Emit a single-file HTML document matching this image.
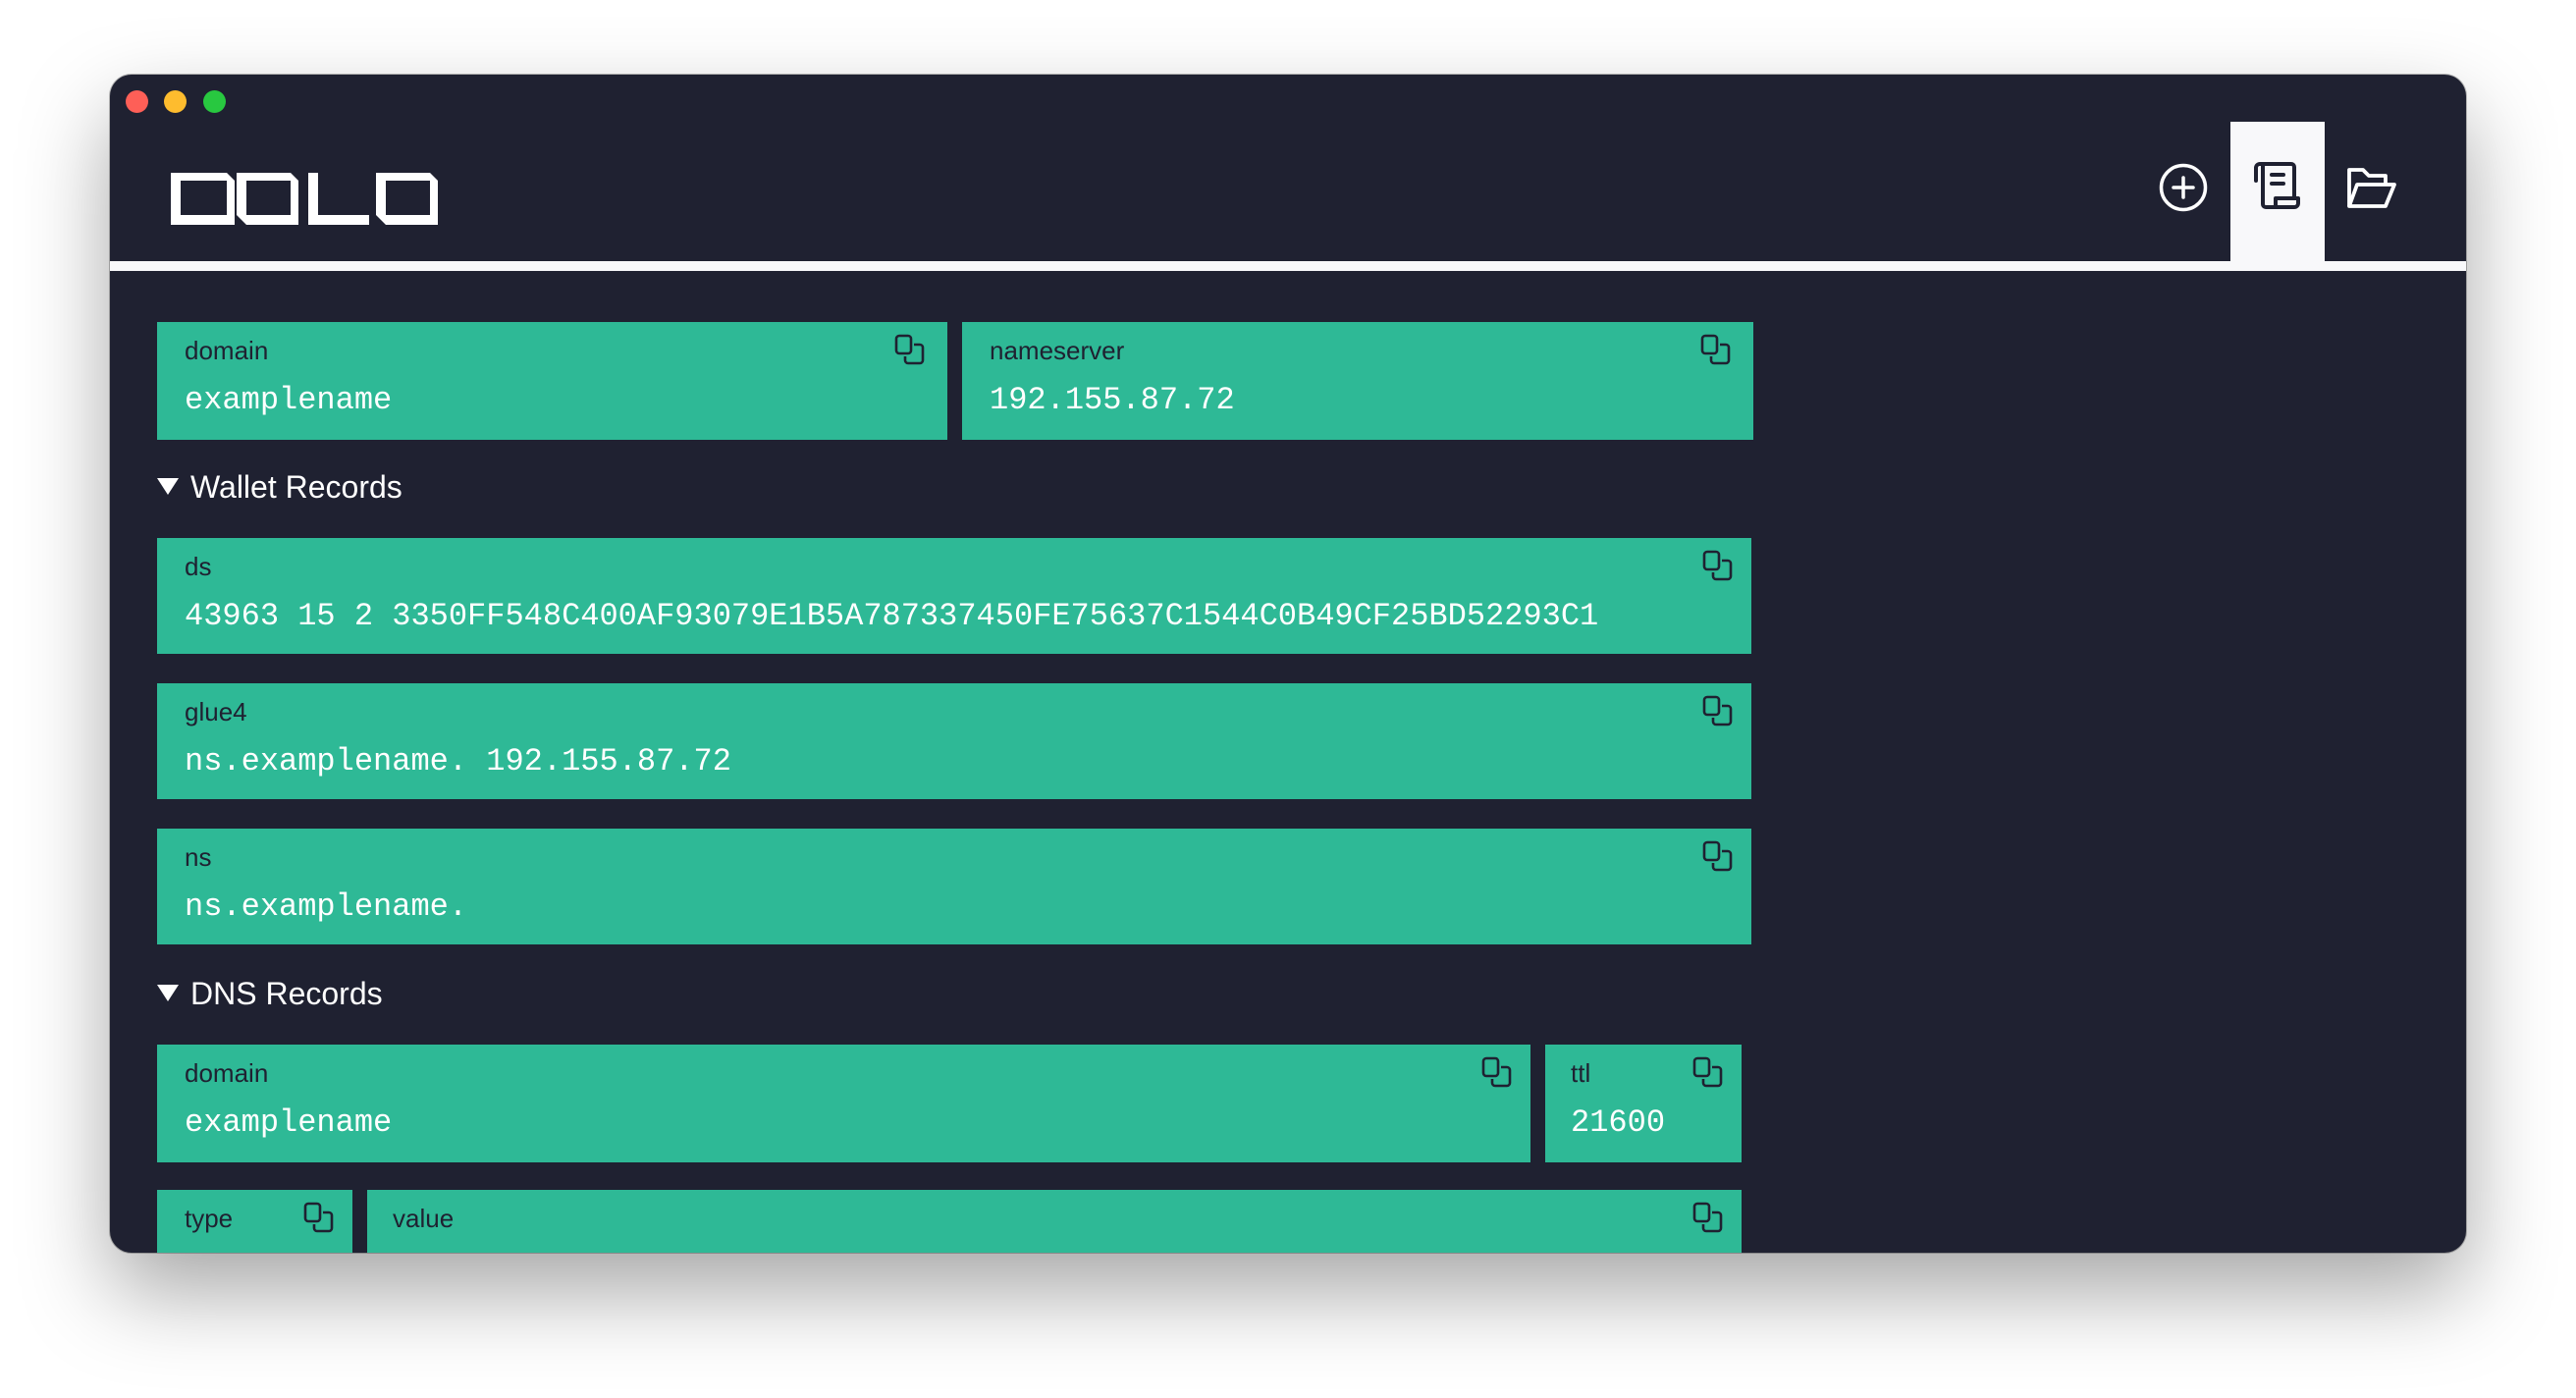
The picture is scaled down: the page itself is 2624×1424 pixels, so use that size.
<!DOCTYPE html>
<html><head><meta charset="utf-8"><style>
*{margin:0;padding:0;box-sizing:border-box}
body{width:2624px;height:1424px;background:#fff;position:relative;overflow:hidden;font-family:"Liberation Sans",sans-serif}
.win{position:absolute;left:112px;top:76px;width:2400px;height:1200px;background:#1f2131;border-radius:22px;overflow:hidden;box-shadow:0 40px 90px rgba(0,0,0,.35),0 0 0 1px rgba(0,0,0,.25)}
.dot{position:absolute;top:16px;width:23px;height:23px;border-radius:50%}
.rule{position:absolute;left:0;top:190px;width:100%;height:10px;background:#f8f8fa}
.tab{position:absolute;left:2160px;top:48px;width:96px;height:142px;background:#f8f8fa}
.card{position:absolute;background:#2eb996;height:118px}
.lbl{position:absolute;left:28px;top:14px;font-size:26px;color:#1f2131;font-family:"Liberation Sans",sans-serif}
.val{position:absolute;left:28px;top:61px;font-size:32px;color:#fff;font-family:"Liberation Mono",monospace;white-space:nowrap}
.cp{position:absolute;top:12px;width:32px;height:32px}
.h{position:absolute;left:48px;font-size:32px;color:#fff}
.h span{display:inline-block;width:0;height:0;border-left:11px solid transparent;border-right:11px solid transparent;border-top:17px solid #fff;margin-right:12px;vertical-align:3px}
</style></head><body>
<div class="win">
<div class="dot" style="left:16px;background:#fe5f57"></div>
<div class="dot" style="left:55px;background:#febc2e"></div>
<div class="dot" style="left:95px;background:#28c840"></div>
<svg style="position:absolute;left:62px;top:100px" width="274" height="53" viewBox="0 0 274 53" fill="#fff">
<path d="M0 0h57l8 8v35h-8v-35h-47v35h55v10h-65z"/>
<path d="M67 0h55l8 8v35h-8v-35h-45v35h53v10h-53l-10-10z"/>
<path d="M140 0h10v43h52v10h-62z"/>
<path d="M209 0h55l8 8v35h-8v-35h-45v35h53v10h-53l-10-10z"/>
</svg>
<div class="tab"></div>
<div class="rule"></div>
<svg style="position:absolute;left:2087px;top:90px" width="50" height="50" viewBox="0 0 50 50" fill="none" stroke="#fff" stroke-width="3.5" stroke-linecap="round"><circle cx="25" cy="25" r="22.5"/><path d="M25 15v20M15 25h20"/></svg>
<svg style="position:absolute;left:2183px;top:88px" width="50" height="50" viewBox="0 0 50 50" fill="none" stroke="#1f2131" stroke-width="4" stroke-linecap="round" stroke-linejoin="round"><path d="M3 20V7a4 4 0 0 1 4-4h32a3 3 0 0 1 3 3v31"/><path d="M10 3v41a3 3 0 0 0 3 3h29a4 4 0 0 0 4-4v-5H23v8"/><path d="M19 14h12M19 23h12"/></svg>
<svg style="position:absolute;left:2278px;top:92px" width="52" height="46" viewBox="0 0 52 46" fill="none" stroke="#fff" stroke-width="3.8" stroke-linejoin="round"><path d="M3 42V5h14l6 6h17v8"/><path d="M3 42l8-22h38l-9 22z"/></svg>

<div class="card" style="left:48px;top:252px;width:805px;height:120px"><div class="lbl">domain</div><div class="val">examplename</div><svg class="cp" style="right:22px" viewBox="0 0 32 32" fill="none" stroke="#1f2131" stroke-width="2.6"><rect x="2" y="2" width="15" height="18" rx="3"/><path d="M20 11h6a3 3 0 0 1 3 3v13a3 3 0 0 1-3 3H14a3 3 0 0 1-3-3v-4"/></svg></div>
<div class="card" style="left:868px;top:252px;width:806px;height:120px"><div class="lbl">nameserver</div><div class="val">192.155.87.72</div><svg class="cp" style="right:22px" viewBox="0 0 32 32" fill="none" stroke="#1f2131" stroke-width="2.6"><rect x="2" y="2" width="15" height="18" rx="3"/><path d="M20 11h6a3 3 0 0 1 3 3v13a3 3 0 0 1-3 3H14a3 3 0 0 1-3-3v-4"/></svg></div>

<div class="h" style="top:402px"><span></span>Wallet Records</div>
<div class="card" style="left:48px;top:472px;width:1624px"><div class="lbl">ds</div><div class="val">43963 15 2 3350FF548C400AF93079E1B5A787337450FE75637C1544C0B49CF25BD52293C1</div><svg class="cp" style="right:18px" viewBox="0 0 32 32" fill="none" stroke="#1f2131" stroke-width="2.6"><rect x="2" y="2" width="15" height="18" rx="3"/><path d="M20 11h6a3 3 0 0 1 3 3v13a3 3 0 0 1-3 3H14a3 3 0 0 1-3-3v-4"/></svg></div>
<div class="card" style="left:48px;top:620px;width:1624px"><div class="lbl">glue4</div><div class="val">ns.examplename. 192.155.87.72</div><svg class="cp" style="right:18px" viewBox="0 0 32 32" fill="none" stroke="#1f2131" stroke-width="2.6"><rect x="2" y="2" width="15" height="18" rx="3"/><path d="M20 11h6a3 3 0 0 1 3 3v13a3 3 0 0 1-3 3H14a3 3 0 0 1-3-3v-4"/></svg></div>
<div class="card" style="left:48px;top:768px;width:1624px"><div class="lbl">ns</div><div class="val">ns.examplename.</div><svg class="cp" style="right:18px" viewBox="0 0 32 32" fill="none" stroke="#1f2131" stroke-width="2.6"><rect x="2" y="2" width="15" height="18" rx="3"/><path d="M20 11h6a3 3 0 0 1 3 3v13a3 3 0 0 1-3 3H14a3 3 0 0 1-3-3v-4"/></svg></div>

<div class="h" style="top:918px"><span></span>DNS Records</div>
<div class="card" style="left:48px;top:988px;width:1399px;height:120px"><div class="lbl">domain</div><div class="val">examplename</div><svg class="cp" style="right:18px" viewBox="0 0 32 32" fill="none" stroke="#1f2131" stroke-width="2.6"><rect x="2" y="2" width="15" height="18" rx="3"/><path d="M20 11h6a3 3 0 0 1 3 3v13a3 3 0 0 1-3 3H14a3 3 0 0 1-3-3v-4"/></svg></div>
<div class="card" style="left:1462px;top:988px;width:200px;height:120px"><div class="lbl" style="left:26px">ttl</div><div class="val" style="left:26px">21600</div><svg class="cp" style="right:18px" viewBox="0 0 32 32" fill="none" stroke="#1f2131" stroke-width="2.6"><rect x="2" y="2" width="15" height="18" rx="3"/><path d="M20 11h6a3 3 0 0 1 3 3v13a3 3 0 0 1-3 3H14a3 3 0 0 1-3-3v-4"/></svg></div>
<div class="card" style="left:48px;top:1136px;width:199px"><div class="lbl">type</div><svg class="cp" style="right:18px" viewBox="0 0 32 32" fill="none" stroke="#1f2131" stroke-width="2.6"><rect x="2" y="2" width="15" height="18" rx="3"/><path d="M20 11h6a3 3 0 0 1 3 3v13a3 3 0 0 1-3 3H14a3 3 0 0 1-3-3v-4"/></svg></div>
<div class="card" style="left:262px;top:1136px;width:1400px"><div class="lbl" style="left:26px">value</div><svg class="cp" style="right:18px" viewBox="0 0 32 32" fill="none" stroke="#1f2131" stroke-width="2.6"><rect x="2" y="2" width="15" height="18" rx="3"/><path d="M20 11h6a3 3 0 0 1 3 3v13a3 3 0 0 1-3 3H14a3 3 0 0 1-3-3v-4"/></svg></div>
</div>
</body></html>
